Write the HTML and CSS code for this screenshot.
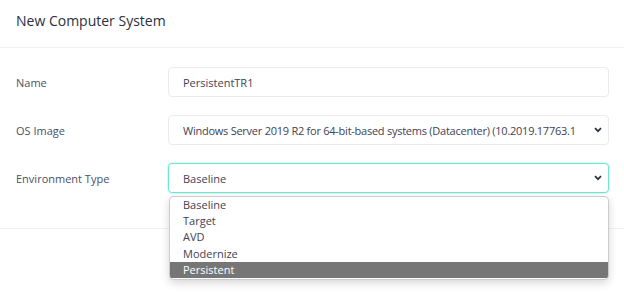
FILE: index.html
```html
<!DOCTYPE html>
<html>
<head>
<meta charset="utf-8">
<link rel="stylesheet" href="styles.css">
</head>
<body>
<div class="modal">
  <div class="modal-header">
    <h1 class="modal-title">New Computer System</h1>
  </div>
  <div class="modal-body">
    <div class="form-row">
      <label class="form-label">Name</label>
      <div class="field">PersistentTR1</div>
    </div>
    <div class="form-row">
      <label class="form-label">OS Image</label>
      <div class="field select">
        <span class="field-text long">Windows Server 2019 R2 for 64-bit-based systems (Datacenter) (10.2019.17763.1</span>
        <svg class="chev" width="8" height="6" viewBox="0 0 8 6"><path d="M1 1.2 L4 4.2 L7 1.2" fill="none" stroke="#2f3447" stroke-width="1.8"/></svg>
      </div>
    </div>
    <div class="form-row">
      <label class="form-label">Environment Type</label>
      <div class="field-wrap">
        <div class="field select focused">
          <span class="field-text">Baseline</span>
          <svg class="chev" width="8" height="6" viewBox="0 0 8 6"><path d="M1 1.2 L4 4.2 L7 1.2" fill="none" stroke="#2f3447" stroke-width="1.8"/></svg>
        </div>
        <ul class="dropdown">
          <li>Baseline</li>
          <li>Target</li>
          <li>AVD</li>
          <li>Modernize</li>
          <li class="active">Persistent</li>
        </ul>
      </div>
    </div>
  </div>
  <div class="modal-footer">
    <button class="btn-primary">Save</button>
  </div>
</div>
</body>
</html>
```

FILE: styles.css
```css
* { box-sizing: border-box; }
html, body { margin: 0; padding: 0; background: #fff; }
body {
  width: 624px;
  height: 292px;
  overflow: hidden;
  font-family: "Open Sans", "DejaVu Sans", sans-serif;
  color: #3f4254;
}
.modal { width: 624px; }
.modal-header {
  padding: 10px 16px 15px;
  border-bottom: 1px solid #eff1f5;
}
.modal-title {
  margin: 0;
  font-size: 14px;
  line-height: 22px;
  font-weight: 400;
  color: #2b2f40;
}
.modal-body {
  padding: 19px 15px 35px 16px;
  display: flex;
  flex-direction: column;
  gap: 18px;
}
.form-row {
  display: grid;
  grid-template-columns: 152px 441px;
  align-items: center;
}
.form-label {
  font-size: 11px;
  color: #4b5064;
}
.field {
  height: 30px;
  border: 1px solid #e9ebf0;
  border-radius: 4px;
  padding: 0 14px;
  font-size: 11px;
  color: #3f4254;
  display: flex;
  align-items: center;
  background: #fff;
}
.field.select { padding-right: 5px; }
.field-text { flex: 1; white-space: nowrap; overflow: hidden; margin-right: 12px; }
.field-text.long { letter-spacing: -0.25px; }
.chev { flex: none; margin-right: 1px; }
.field.focused {
  border-color: #6fe6cf;
  box-shadow: 0 0 0 1px rgba(111, 230, 207, 0.25);
}
.field-wrap { position: relative; }
.dropdown {
  position: absolute;
  left: 1px;
  right: 0;
  top: 33px;
  margin: 0;
  padding: 0 0 1px;
  list-style: none;
  background: #fff;
  border: 1px solid rgba(0, 0, 0, 0.2);
  border-radius: 5px;
  box-shadow: 0 3px 8px rgba(0, 0, 0, 0.16);
  overflow: hidden;
  z-index: 2;
}
.dropdown li {
  font-size: 11px;
  line-height: 16.2px;
  padding: 0 13px;
  color: #3f4254;
}
.dropdown li.active { background: #767676; color: #fff; }
.modal-footer {
  border-top: 1px solid #eff1f5;
  padding: 20px 15px 20px 16px;
  display: flex;
  justify-content: flex-end;
}
.btn-primary {
  height: 29px;
  padding: 0 20px;
  border: none;
  border-radius: 4px;
  background: #4cbf98;
  color: #fff;
  font-family: inherit;
  font-size: 12px;
}
```
